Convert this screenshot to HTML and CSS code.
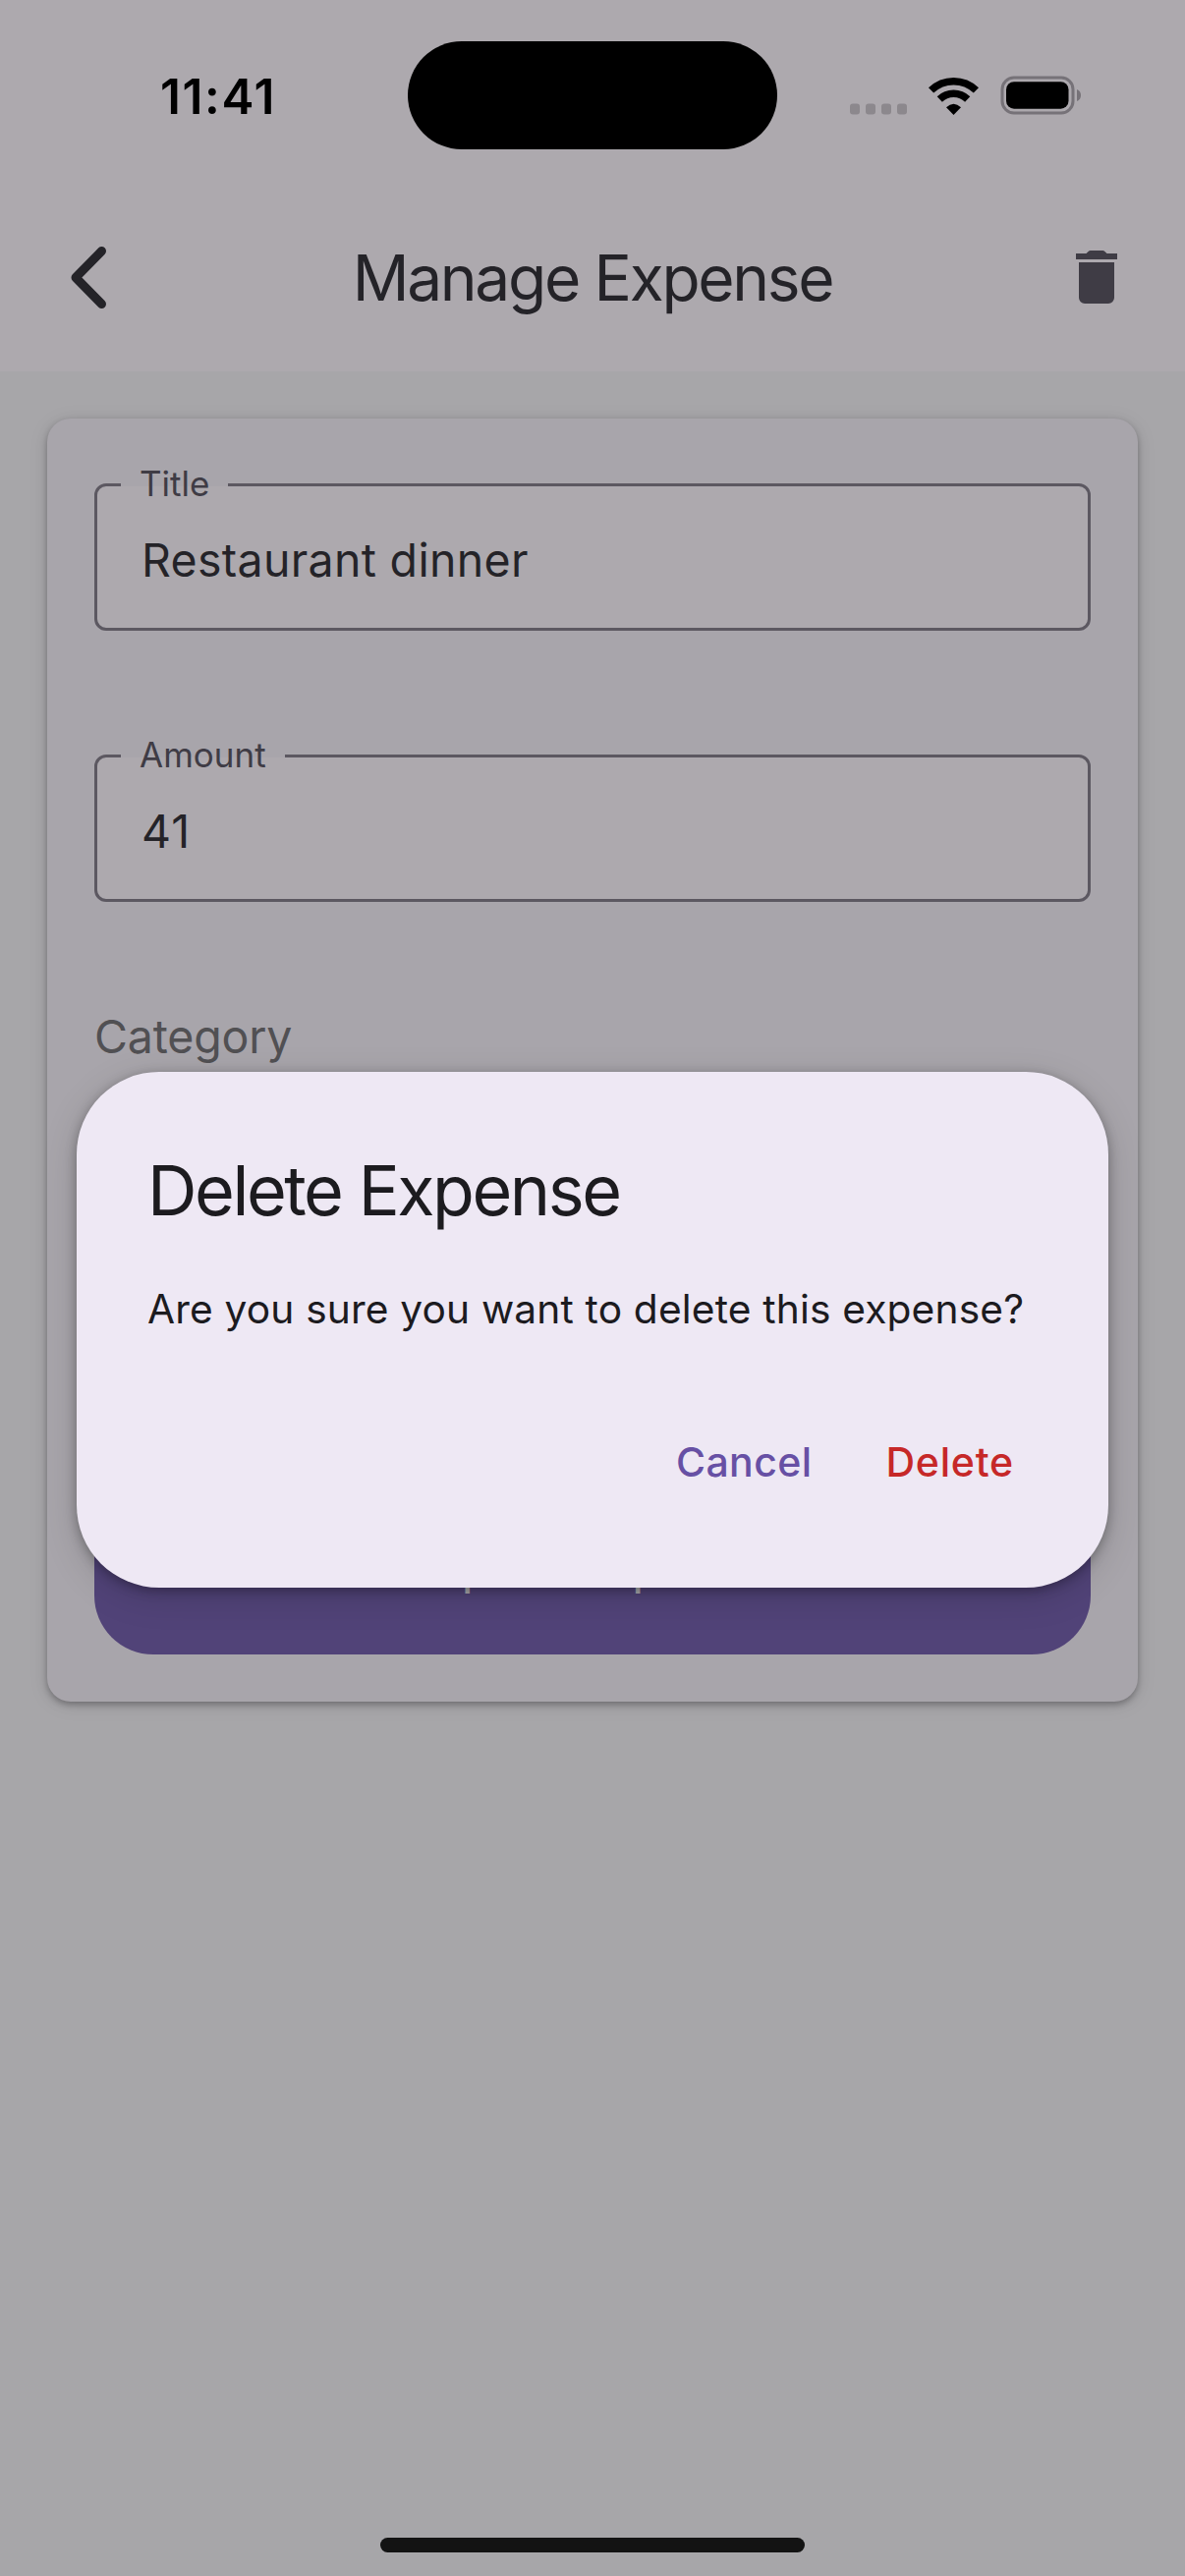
FILE: index.html
```html
<!DOCTYPE html>
<html lang="en">
<head>
<meta charset="utf-8">
<title>Manage Expense</title>
<link rel="stylesheet" href="styles.css">
</head>
<body>
<div class="screen">
  <div class="app">
    <header class="appbar">
      <svg class="back" viewBox="0 0 72 72" fill="none" stroke="currentColor" stroke-width="9" stroke-linecap="round" stroke-linejoin="round"><path d="M49.500 9.500 23 36.500 49.500 63.500"/></svg>
      <h1 class="appbar-title">Manage Expense</h1>
      <svg class="trash" viewBox="0 0 24 24" fill="currentColor"><path d="M19 4h-3.500l-.700-.700q-.300-.300-.700-.300H9.900q-.400 0-.700.300L8.500 4H5v2h14zM6 19a2 2 0 0 0 2 2h8a2 2 0 0 0 2-2V7H6z"/></svg>
    </header>
    <main class="card">
      <label class="field"><span class="field-label">Title</span><span class="field-value">Restaurant dinner</span></label>
      <label class="field"><span class="field-label amount">Amount</span><span class="field-value num">41</span></label>
      <div class="category">Category</div>
      <button class="submit">Update Expense</button>
    </main>
  </div>
  <div class="scrim">
    <section class="dialog">
      <h2 class="dialog-title">Delete Expense</h2>
      <p class="dialog-text">Are you sure you want to delete this expense?</p>
      <div class="actions"><span class="cancel">Cancel</span><span class="delete">Delete</span></div>
    </section>
  </div>
  <div class="statusbar">
    <span class="time">11:41</span>
    <span class="island"></span>
    <svg class="status-icons" viewBox="0 0 240 42">
      <g fill="#8c888d"><rect x="5" y="29.500" width="10" height="11" rx="3"/><rect x="21" y="29.500" width="10" height="11" rx="3"/><rect x="37" y="29.500" width="10" height="11" rx="3"/><rect x="53" y="29.500" width="10" height="11" rx="3"/></g>
      <g fill="none" stroke="#000" stroke-width="7.500"><path d="M87.600 15.900a33 33 0 0 1 45.800 0"/><path d="M96.300 25a20.500 20.500 0 0 1 28.400 0"/></g>
      <path d="M110.500 41 103 33.200q7.500-7 15 0z"/>
      <rect x="160" y="3" width="72" height="36" rx="12" fill="none" stroke="#767278" stroke-width="3"/>
      <rect x="164" y="7.200" width="63.500" height="27.500" rx="8"/>
      <path d="M236 15q4 1.500 4 6t-4 6z" fill="#767278"/>
    </svg>
  </div>
  <div class="home"></div>
</div>
</body>
</html>
```
FILE: styles.css
```css
* { box-sizing: border-box; margin: 0; }
body { font-family: Inter, "Liberation Sans", sans-serif; color: #1c1b1f; }
.screen { position: relative; width: 1206px; height: 2622px; overflow: hidden; }
.app { height: 100%; background: #f5f5f5; }
.appbar { height: 378px; padding: 186px 54px 0; background: #fffbfe; display: flex; justify-content: space-between; align-items: center; }
.back, .trash { width: 72px; height: 72px; }
.back { color: #1c1b1f; }
.trash { color: #49454f; }
.appbar-title { padding-top: 2px; font-size: 64px; font-weight: 400; line-height: 84px; letter-spacing: -2.3px; }
.card { margin: 48px 48px 0; height: 1306px; padding: 66px 48px 48px; display: flex; flex-direction: column; border-radius: 24px; background: #f7f3f9; box-shadow: 0 3px 6px rgba(0,0,0,.3), 0 3px 18px rgba(0,0,0,.15); }
.field { position: relative; display: flex; align-items: center; height: 150px; margin-bottom: 126px; padding: 6px 0 0 45px; border: 3px solid #79747e; border-radius: 12px; background: #fffbfe; flex: none; }
.field-label { position: absolute; left: 24px; top: -21px; height: 36px; padding-left: 19px; width: 109px; line-height: 36px; font-size: 35px; color: #49454f; background: linear-gradient(#f7f3f9 21px, #fffbfe 21px); white-space: nowrap; }
.amount { width: 167px; }
.field-value { font-size: 46.5px; line-height: 60px; letter-spacing: .3px; }
.num { letter-spacing: 1px; }
.category { height: 60px; margin-top: -19px; font-size: 46.5px; line-height: 60px; letter-spacing: -.2px; color: #666; }
.submit { margin-top: auto; height: 171px; border: 0; border-radius: 60px; background: #6750a4; color: #fff; font: 500 41px/60px Inter, sans-serif; letter-spacing: .4px; padding: 1px 0 0; }
.scrim { position: absolute; inset: 0; display: flex; justify-content: center; align-items: flex-start; padding-top: 1091px; background: rgba(50,47,55,.4); }
.dialog { width: 1050px; height: 525px; padding: 73px 72px 60px; border-radius: 84px; background: #eee8f4; box-shadow: 0 3px 12px rgba(0,0,0,.3), 0 9px 36px rgba(0,0,0,.15); }
.dialog-title { font-size: 70px; font-weight: 400; line-height: 96px; letter-spacing: -2.45px; }
.dialog-text { margin-top: 43px; font-size: 40.700px; line-height: 60px; letter-spacing: .16px; white-space: nowrap; }
.actions { display: flex; justify-content: flex-end; gap: 75px; margin-top: 95px; padding-right: 24px; font-size: 41px; font-weight: 500; line-height: 60px; letter-spacing: .4px; }
.cancel { color: #6750a4; }
.delete { color: #c62828; letter-spacing: .8px; }
.statusbar { position: absolute; top: 0; left: 0; width: 100%; height: 194px; display: flex; align-items: center; padding: 0 106px 0 163px; }
.time { width: 252px; font-size: 49.500px; font-weight: 600; line-height: 60px; letter-spacing: 1.6px; color: #000; padding-top: 1px; }
.island { width: 376px; height: 110px; border-radius: 55px; background: #000; }
.status-icons { width: 240px; height: 42px; margin-left: auto; }
.home { position: absolute; left: 387px; bottom: 24px; width: 432px; height: 15px; border-radius: 8px; background: #131313; }
```
